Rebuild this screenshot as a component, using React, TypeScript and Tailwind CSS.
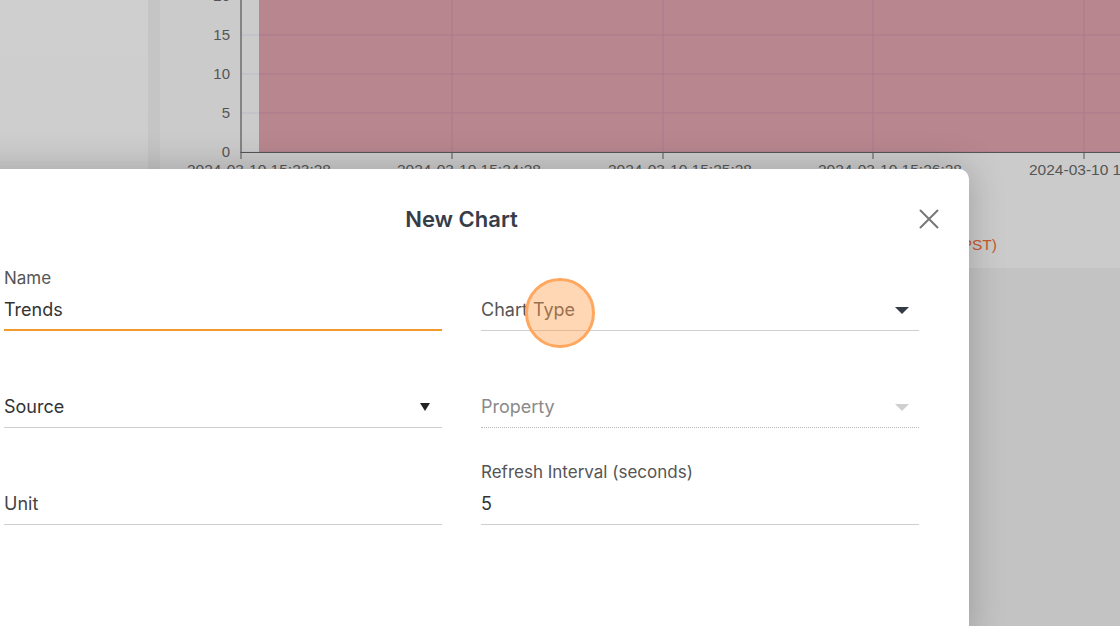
import type { ReactNode } from "react";

const yTicks = [
  { label: "20", y: -4 },
  { label: "15", y: 35 },
  { label: "10", y: 74 },
  { label: "5", y: 113 },
  { label: "0", y: 152 },
];

const xTicks = [
  { x: 81, label: "2024-03-10 15:23:28", start: 27 },
  { x: 292, label: "2024-03-10 15:24:28", start: 237 },
  { x: 503, label: "2024-03-10 15:25:28", start: 448 },
  { x: 713, label: "2024-03-10 15:26:28", start: 658 },
  { x: 924, label: "2024-03-10 15:27:28", start: 869 },
];

function ChartBackdrop() {
  return (
    <svg width="960" height="268" className="block" style={{ fontFamily: '"Liberation Sans", Arial, sans-serif' }}>
      <rect x="99" y="0" width="861" height="152" fill="#b8868f" />
      {yTicks.map((t) => (
        <g key={t.label}>
          <line x1="81" x2="99" y1={t.y} y2={t.y} stroke="#babdca" strokeWidth="1" />
          <line x1="99" x2="960" y1={t.y} y2={t.y} stroke="#a97a8c" strokeWidth="1" />
          <text x="70" y={t.y + 5} textAnchor="end" fontSize="15" fill="#555">
            {t.label}
          </text>
        </g>
      ))}
      {xTicks.map((t) => (
        <g key={t.start}>
          {t.x > 99 && <line x1={t.x} x2={t.x} y1="0" y2="152" stroke="#a97a8c" strokeWidth="1" />}
          <line x1={t.x} x2={t.x} y1="152" y2="159" stroke="#555" strokeWidth="1" />
          <text x={t.start} y="175" fontSize="15.5" fill="#555">
            {t.label}
          </text>
        </g>
      ))}
      <line x1="81" x2="81" y1="0" y2="153" stroke="#555" strokeWidth="1.2" />
      <line x1="81" x2="960" y1="152.5" y2="152.5" stroke="#555" strokeWidth="1.2" />
      <text x="837" y="250" textAnchor="end" fontSize="15.5" fill="#c65a2e">
        Timestamp (PST)
      </text>
    </svg>
  );
}

function Caret({ kind }: { kind: "solid" | "small" | "muted" }) {
  if (kind === "small") {
    return (
      <svg width="10" height="8" viewBox="0 0 10 8" className="mr-[12px]">
        <path d="M0 0 H10 L5 8 Z" fill="#222" />
      </svg>
    );
  }
  return (
    <svg width="14" height="7" viewBox="0 0 14 7" className="mr-[10px]">
      <path d="M0 0 H14 L7 7 Z" fill={kind === "solid" ? "#343b47" : "#cfcfcf"} />
    </svg>
  );
}

type FieldProps = {
  label?: string;
  children: ReactNode;
  focused?: boolean;
  disabled?: boolean;
  caret?: "solid" | "small" | "muted";
};

function Field({ label, children, focused, disabled, caret }: FieldProps) {
  const line = focused
    ? "border-b-2 border-[#f39a2c]"
    : disabled
      ? "border-b border-dotted border-[#b8b8b8]"
      : "border-b border-[#cfcfcf]";
  return (
    <div className="flex h-[72px] flex-col justify-end">
      {label && <div className="mb-[5px] text-[17px] leading-[20px] text-[#555]">{label}</div>}
      <div className={`flex h-[38px] items-center justify-between pb-[3px] ${line}`}>
        <div className="text-[18px] leading-[24px]">{children}</div>
        {caret && <Caret kind={caret} />}
      </div>
    </div>
  );
}

export default function App() {
  return (
    <div className="relative h-[626px] w-[1120px] overflow-hidden bg-[#c8c8c8]">
      <div className="flex h-full">
        <div className="w-[148px] bg-gradient-to-b from-[#cfcfcf] to-[#c9c9c9]" />
        <div className="w-[12px] bg-[#c5c5c5]" />
        <div className="flex flex-1 flex-col">
          <div className="h-[268px] bg-[#cbcbcb]">
            <ChartBackdrop />
          </div>
          <div className="flex-1 bg-[#c3c3c3]" />
        </div>
      </div>

      <div
        className="absolute left-[-46px] top-[169px] h-[470px] w-[1015px] rounded-t-[10px] bg-white px-[50px] shadow-[0_0_36px_rgba(0,0,0,0.22)]"
        style={{ fontFamily: 'Inter, "Noto Sans", sans-serif' }}
      >
        <div className="relative pt-[36px]">
          <h2 className="text-center text-[22px] font-semibold leading-[28px] text-[#363d49]">New Chart</h2>
          <button className="absolute right-[-20px] top-[40px] flex h-[20px] w-[20px] items-center justify-center" aria-label="Close">
            <svg width="20" height="20" viewBox="0 0 20 20">
              <path d="M1.5 1.5 L18.5 18.5 M18.5 1.5 L1.5 18.5" stroke="#777" strokeWidth="2" strokeLinecap="round" />
            </svg>
          </button>
        </div>

        <div className="mt-[26px] grid grid-cols-2 gap-x-[39px] gap-y-[25px]">
          <Field label="Name" focused>
            <span className="text-[#333]">Trends</span>
          </Field>
          <Field caret="solid">
            <span className="text-[#555]">Chart Type</span>
          </Field>
          <Field caret="small">
            <span className="text-[#333]">Source</span>
          </Field>
          <Field caret="muted" disabled>
            <span className="text-[#8a8a8a]">Property</span>
          </Field>
          <Field>
            <span className="text-[#444]">Unit</span>
          </Field>
          <Field label="Refresh Interval (seconds)">
            <span className="text-[#333]">5</span>
          </Field>
        </div>
      </div>

      <div className="absolute left-[525px] top-[278px] h-[70px] w-[70px] rounded-full border-[3px] border-[#ffa75f] bg-[#ff9a45]/40" />
    </div>
  );
}
